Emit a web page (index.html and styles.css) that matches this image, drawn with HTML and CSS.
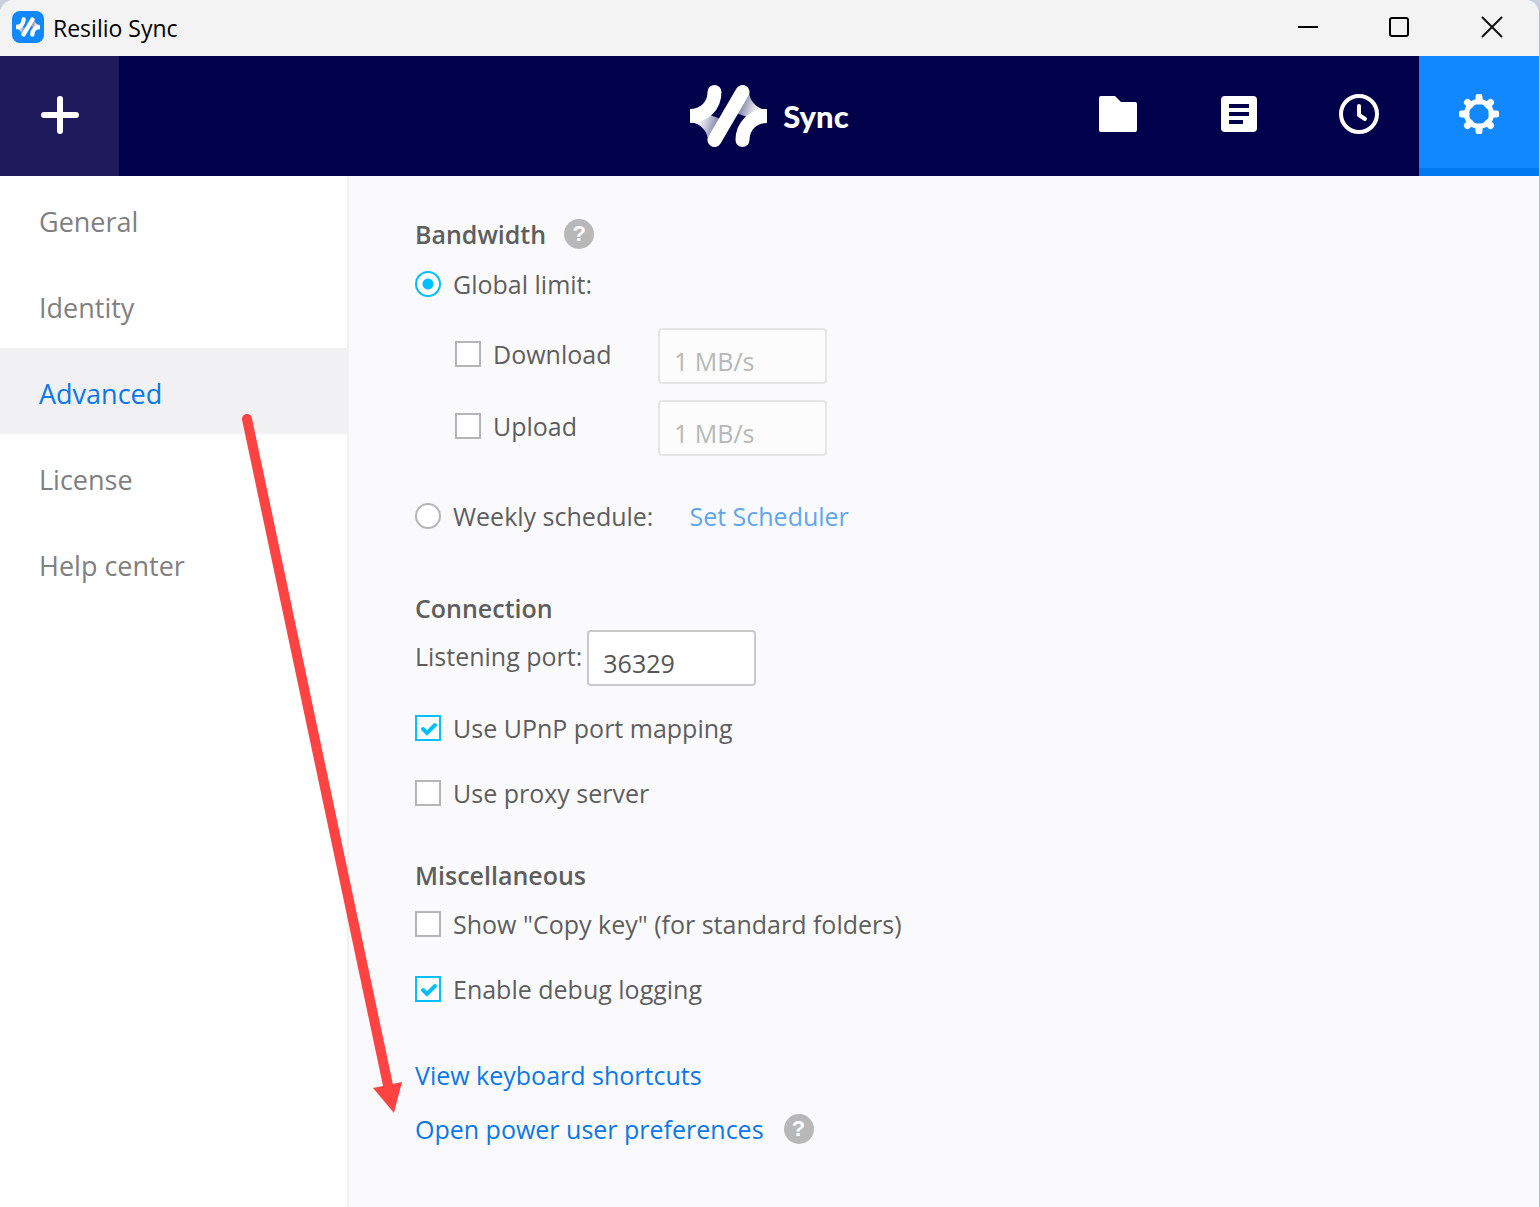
FILE: index.html
```html
<!DOCTYPE html>
<html lang="en">
<head>
<meta charset="utf-8">
<title>Resilio Sync</title>
<link rel="stylesheet" href="styles.css">
</head>
<body>
<svg class="defs" width="0" height="0" aria-hidden="true">
  <defs>
    <linearGradient id="fold" gradientUnits="userSpaceOnUse" x1="6" y1="37" x2="28" y2="44">
      <stop offset="0" stop-color="#fff"/>
      <stop offset="0.4" stop-color="#d2d2e0"/>
      <stop offset="1" stop-color="#77779f"/>
    </linearGradient>
    <symbol id="mark" viewBox="0 0 77 62">
      <g id="half">
        <path d="M0 37C10 38 18 46 18 56L31 34L20 30Z" fill="url(#fold)"/>
        <path d="M24.500 7C24.500 21 14 31 0 31H-8" fill="none" stroke="#fff" stroke-width="14" stroke-linecap="round"/>
      </g>
      <use href="#half" transform="rotate(180 38.500 31)"/>
      <path d="M52.500 7L24.500 55" stroke="#fff" stroke-width="14" stroke-linecap="round"/>
    </symbol>
  </defs>
</svg>
<div class="window">
  <header class="titlebar">
    <span class="app-icon"><svg width="24" height="20"><use href="#mark"/></svg></span>
    <span class="app-name">Resilio Sync</span>
    <div class="window-controls">
      <button type="button" aria-label="Minimize"><svg width="22" height="22"><path d="M1 11H21" stroke="#000" stroke-width="2"/></svg></button>
      <button type="button" aria-label="Maximize"><svg width="22" height="22"><rect x="1" y="2" width="18" height="18" rx="2" fill="none" stroke="#000" stroke-width="2"/></svg></button>
      <button type="button" aria-label="Close"><svg width="22" height="22"><path d="M1 1L21 21M21 1L1 21" stroke="#111" stroke-width="2"/></svg></button>
    </div>
  </header>
  <nav class="toolbar" aria-label="Main">
    <button type="button" class="tool add" aria-label="Add"><svg width="40" height="40"><path d="M20 4V36M4 20H36" stroke="#fff" stroke-width="6" stroke-linecap="round"/></svg></button>
    <div class="brand"><svg width="77" height="62" aria-hidden="true"><use href="#mark"/></svg><span>Sync</span></div>
    <div class="tools">
      <button type="button" class="tool" aria-label="Folders"><svg width="40" height="40"><path d="M2 2H16L22 8H36Q38 8 38 10V36Q38 38 36 38H2Q0 38 0 36V4Q0 2 2 2Z" fill="#fff"/></svg></button>
      <button type="button" class="tool" aria-label="Log"><svg width="40" height="40"><rect x="2" y="2" width="36" height="36" rx="4" fill="#fff"/><path d="M10 12H30M10 20H30M10 28H24" stroke="#00004b" stroke-width="4"/></svg></button>
      <button type="button" class="tool" aria-label="History"><svg width="40" height="40" fill="none" stroke="#fff" stroke-width="4"><circle cx="20" cy="20" r="18"/><path d="M20 12V21L26 25" stroke-linecap="round" stroke-linejoin="round"/></svg></button>
      <button type="button" class="tool active" aria-label="Settings"><svg width="40" height="40" fill="none" stroke="#fff"><circle cx="20" cy="20" r="12.500" stroke-width="5"/><path d="M20 3V7M20 33V37M3 20H7M33 20H37M8.500 8.500L11 11M29 29L31.500 31.500M31.500 8.500L29 11M11 29L8.500 31.500" stroke-width="7" stroke-linecap="round"/></svg></button>
    </div>
  </nav>
  <div class="body">
    <aside class="sidebar">
      <a href="#general">General</a>
      <a href="#identity">Identity</a>
      <a href="#advanced" class="current" aria-current="page">Advanced</a>
      <a href="#license">License</a>
      <a href="#help">Help center</a>
    </aside>
    <main class="content">
      <section class="bandwidth">
        <div class="row heading"><h2>Bandwidth</h2><button type="button" class="help" aria-label="About bandwidth">?</button></div>
        <label class="row"><input type="radio" name="limit" checked>Global limit:</label>
        <div class="limits">
          <label class="row"><input type="checkbox">Download</label>
          <input class="field" type="text" value="1 MB/s" aria-label="Download limit" disabled>
          <label class="row"><input type="checkbox">Upload</label>
          <input class="field" type="text" value="1 MB/s" aria-label="Upload limit" disabled>
        </div>
        <div class="row schedule">
          <label class="row"><input type="radio" name="limit">Weekly schedule:</label>
          <a href="#scheduler" class="dim">Set Scheduler</a>
        </div>
      </section>
      <section class="connection">
        <h2>Connection</h2>
        <div class="port"><label for="port">Listening port:</label><input class="field" id="port" type="text" value="36329"></div>
        <div class="options">
          <label class="row"><input type="checkbox" checked>Use UPnP port mapping</label>
          <label class="row"><input type="checkbox">Use proxy server</label>
        </div>
      </section>
      <section class="misc">
        <h2>Miscellaneous</h2>
        <div class="options">
          <label class="row"><input type="checkbox">Show "Copy key" (for standard folders)</label>
          <label class="row"><input type="checkbox" checked>Enable debug logging</label>
        </div>
      </section>
      <section class="links">
        <a href="#shortcuts">View keyboard shortcuts</a>
        <div class="row power"><a href="#power">Open power user preferences</a><button type="button" class="help" aria-label="About power user preferences">?</button></div>
      </section>
    </main>
  </div>
  <svg class="arrow" width="420" height="1130" aria-hidden="true"><path d="M247 419L389 1090" stroke="#ff4343" stroke-width="10" stroke-linecap="round"/><path d="M373 1088L402 1082L394 1113Z" fill="#ff4343"/></svg>
</div>
</body>
</html>
```
FILE: styles.css
```css
* { box-sizing: border-box; }

body {
  margin: 0;
  background: #c9d0dc;
  color: #5e5e5e;
  font: 25px/32px "Open Sans", "Noto Sans", sans-serif;
}

button { border: 0; padding: 0; background: none; font: inherit; }
svg { display: block; }
a { color: #0b78ea; text-decoration: none; }
.defs { position: absolute; }

.window {
  position: relative;
  display: flex;
  flex-direction: column;
  min-height: 100vh;
  border-right: 1px solid #b9bcc0;
  border-radius: 14px 14px 0 0;
  background: #fafafc;
  overflow: hidden;
}

/* Title bar */
.titlebar {
  display: flex;
  align-items: center;
  height: 56px;
  padding: 0 36px 2px 12px;
  background: #f3f3f3;
  color: #000;
  font-size: 23px;
}
.app-icon {
  display: grid;
  place-items: center;
  width: 32px;
  height: 32px;
  margin-right: 9px;
  border-radius: 8px;
  background: #1288ff;
}
.app-name { padding-top: 2px; }
.window-controls { display: flex; gap: 70px; margin-left: auto; }

/* Toolbar */
.toolbar {
  display: grid;
  grid-template-columns: 1fr auto 1fr;
  height: 120px;
  background: #00004b;
}
.tool {
  display: grid;
  place-items: center;
  width: 120px;
  height: 120px;
  padding-bottom: 4px;
}
.add { width: 119px; padding-bottom: 2px; background: #1e1a5b; }
.active { background: #1288ff; border-bottom: 8px solid #007af0; padding: 4px 0 0; }
.brand {
  display: flex;
  align-items: center;
  gap: 16px;
  color: #fff;
  font: 900 31px/40px Lato, sans-serif;
}
.tools { display: flex; justify-self: end; }

/* Sidebar */
.body { display: flex; flex: 1; }
.sidebar {
  flex: none;
  width: 349px;
  border-right: 2px solid #f1f1f4;
  background: #fff;
}
.sidebar a {
  display: block;
  padding: 8px 39px 0;
  height: 86px;
  color: #808080;
  font-size: 27px;
  line-height: 76px;
}
.sidebar .current { background: #f1f1f4; color: #0b78ea; }

/* Settings */
.content { flex: 1; padding: 42px 66px 62px; }
h2 { margin: 0; font-size: 25px; font-weight: 600; line-height: 32px; }
.row { display: flex; align-items: center; height: 32px; }
.heading { gap: 18px; }
.heading + .row { margin-top: 18px; }
.limits {
  display: grid;
  grid-template-columns: 203px 169px;
  row-gap: 16px;
  align-items: start;
  margin: 28px 0 44px 40px;
}
.limits .row { margin-top: 10px; }
.schedule { gap: 36px; }
.dim { opacity: 0.65; }
.connection { margin-top: 60px; }
.port { display: flex; align-items: center; gap: 5px; margin: 6px 0 26px; }
.port label { padding-bottom: 4px; }
.options { display: grid; gap: 33px; }
.misc { margin-top: 50px; }
.misc .options { margin-top: 17px; }
.links { display: grid; gap: 22px; margin-top: 54px; }
.power { gap: 20px; }

.help {
  width: 30px;
  height: 30px;
  border-radius: 50%;
  background: #b8b8b8;
  color: #fff;
  font: 700 22px/30px "Liberation Sans", sans-serif;
}

input[type="checkbox"],
input[type="radio"] {
  appearance: none;
  flex: none;
  width: 26px;
  height: 26px;
  margin: 0 12px 0 0;
  border: 2px solid #b5b5b5;
  background: #fff;
}
input[type="radio"] { border-radius: 50%; }
input[type="checkbox"]:checked,
input[type="radio"]:checked { border-color: #00bfff; }
input[type="radio"]:checked { background: radial-gradient(circle, #00bfff 5px, #fff 6px); }
input[type="checkbox"]:checked {
  background: #fff url("data:image/svg+xml,%3Csvg xmlns='http://www.w3.org/2000/svg' width='22' height='22'%3E%3Cpath d='M6 12L10 16L18 8' fill='none' stroke='%2300bfff' stroke-width='4' stroke-linecap='round'/%3E%3C/svg%3E");
}

.field {
  width: 169px;
  height: 56px;
  padding: 10px 14px 0;
  border: 2px solid #c9c9c9;
  border-radius: 4px;
  background: #fff;
  color: #555;
  font: inherit;
}
.field:disabled { border-color: #e6e6e6; background: #fcfcfc; color: #b8b8b8; }

/* Callout lying over the window */
.arrow { position: absolute; top: 0; left: 0; pointer-events: none; }
```
